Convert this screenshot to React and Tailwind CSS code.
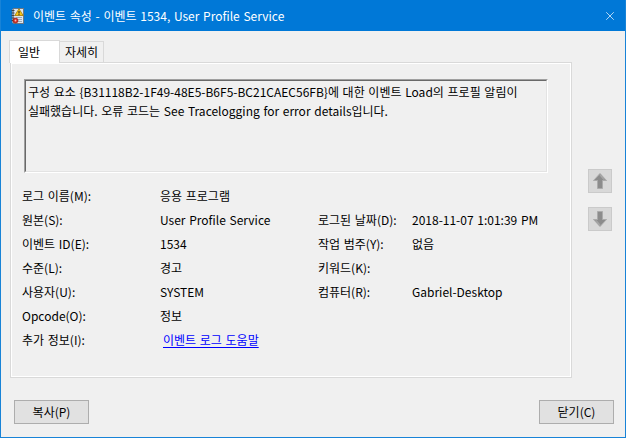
import { X } from "lucide-react";

const font = { fontFamily: '"Noto Sans CJK KR", "Noto Sans", sans-serif' };

const ROWS = [
  ["로그 이름(M):", "응용 프로그램", "", ""],
  ["원본(S):", "User Profile Service", "로그된 날짜(D):", "2018-11-07 1:01:39 PM"],
  ["이벤트 ID(E):", "1534", "작업 범주(Y):", "없음"],
  ["수준(L):", "경고", "키워드(K):", ""],
  ["사용자(U):", "SYSTEM", "컴퓨터(R):", "Gabriel-Desktop"],
  ["Opcode(O):", "정보", "", ""],
];

const LINE1 = "구성 요소 {B31118B2-1F49-48E5-B6F5-BC21CAEC56FB}에 대한 이벤트 Load의 프로필 알림이";
const LINE2 = "실패했습니다. 오류 코드는 See Tracelogging for error details입니다.";

function AppIcon() {
  return (
    <svg width="13" height="16" viewBox="0 0 13 16">
      <rect x="2.5" y="0.5" width="10" height="15" fill="#dfe6ee" stroke="#6b7785" />
      <rect x="1" y="1" width="2" height="14" fill="#8795a6" />
      <path d="M0.5 2.5h3M0.5 5h3M0.5 7.5h3M0.5 10h3M0.5 12.5h3" stroke="#3c4450" />
      <path d="M5 9.5h6M5 11.5h6M5 13.5h6" stroke="#9aa6b4" />
      <path d="M8 0.8L12.2 7.5H3.8Z" fill="#f5c518" stroke="#a17a00" strokeWidth="0.8" />
      <path d="M8 3v2.6" stroke="#222" strokeWidth="1.1" />
      <circle cx="8" cy="6.6" r="0.6" fill="#222" />
      <circle cx="4.5" cy="12.5" r="2.5" fill="#d92d20" stroke="#8a1a12" strokeWidth="0.6" />
      <circle cx="4.5" cy="12.5" r="0.9" fill="#f4c0bb" />
    </svg>
  );
}

function ArrowBtn({ down }) {
  return (
    <div className="w-[24px] h-[24px] bg-[#d8d8d8] border border-[#cacaca] flex items-center justify-center">
      <svg width="16" height="18" viewBox="0 0 16 18" className={down ? "rotate-180" : ""}>
        <path d="M8 1.5L14.5 8.5H10.5V16.5H5.5V8.5H1.5Z" fill="#8c8c8c" stroke="#ababab" strokeWidth="1" />
        <path d="M8 3.2L12.2 7.8" fill="none" stroke="#b8b8b8" strokeWidth="0.9" />
      </svg>
    </div>
  );
}

export default function App() {
  return (
    <div className="w-[626px] h-[438px] bg-[#f0f0f0] border-x border-b border-[#1883d7] flex flex-col text-[12px] text-black overflow-hidden [word-spacing:1px]" style={font}>
      {/* Title bar */}
      <div className="h-[31px] shrink-0 bg-[#0078d7] flex items-center text-white">
        <div className="ml-[10px] mr-[9px] flex"><AppIcon /></div>
        <span className="text-[12px] leading-none">이벤트 속성 - 이벤트 1534, User Profile Service</span>
        <X size={14} strokeWidth={1.2} className="ml-auto mr-[8px]" />
      </div>

      <div className="flex">
        <div className="flex flex-col">
          {/* Tabs */}
          <div className="mt-[9px] ml-[8px] h-[22px] flex items-end">
            <div className="relative z-10 -mb-px h-[23px] w-[51px] bg-white border border-b-0 border-[#d9d9d9] pl-[8px] flex items-center">일반</div>
            <div className="h-[21px] w-[44px] bg-[#f0f0f0] border border-l-0 border-b-0 border-[#d9d9d9] flex items-center justify-center">자세히</div>
          </div>

          {/* Panel */}
          <div className="ml-[9px] w-[562px] h-[316px] border border-[#d9d9d9] bg-[#f0f0f0] shadow-[inset_1px_1px_0_#fff,inset_-1px_-1px_0_#fff]">
            <div className="ml-[13px] mt-[16px] w-[524px] h-[94px] border border-t-[#a0a0a0] border-l-[#a0a0a0] border-r-white border-b-white">
              <div className="h-full border border-t-[#696969] border-l-[#696969] border-r-[#e3e3e3] border-b-[#e3e3e3] px-[2px] pt-px leading-[19px]">
                <div className="whitespace-nowrap">{LINE1}</div>
                <div className="whitespace-nowrap">{LINE2}</div>
              </div>
            </div>

            <div className="mt-[11px] ml-[11px] grid grid-cols-[138px_158px_94px_1fr] auto-rows-[24px] items-center">
              {ROWS.map((r, i) => r.map((c, j) => <div key={i + "-" + j} className="whitespace-nowrap">{c}</div>))}
              <div>추가 정보(I):</div>
              <div className="col-span-3">
                <span className="ml-[3px] text-[#0000ff] underline underline-offset-2">이벤트 로그 도움말</span>
              </div>
            </div>
          </div>
        </div>

        {/* Up / down */}
        <div className="ml-[16px] mt-[138px] flex flex-col gap-[14px]">
          <ArrowBtn />
          <ArrowBtn down />
        </div>
      </div>

      {/* Buttons */}
      <div className="mt-[22px] flex justify-between pl-[13px] pr-[11px]">
        <button className="w-[75px] h-[24px] bg-[#e1e1e1] border border-[#adadad]">복사(P)</button>
        <button className="w-[75px] h-[24px] bg-[#e1e1e1] border border-[#adadad]">닫기(C)</button>
      </div>
    </div>
  );
}
